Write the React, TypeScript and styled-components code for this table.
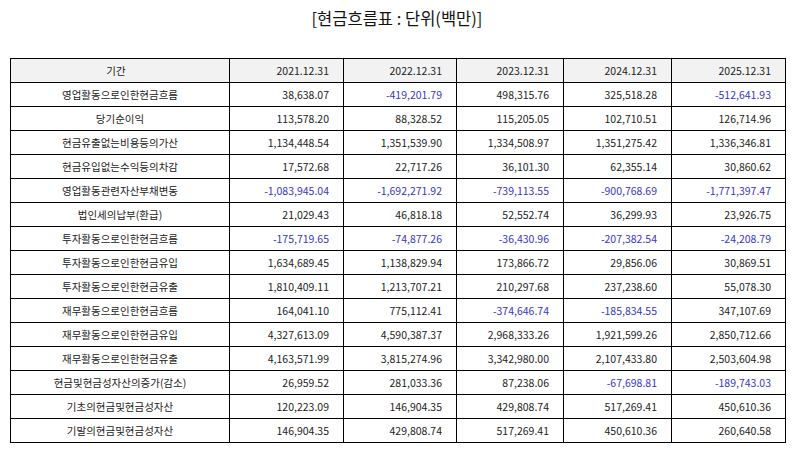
import styled, { createGlobalStyle } from "styled-components";

const GlobalStyle = createGlobalStyle`
  html, body {
    margin: 0;
    padding: 0;
    background: #fff;
  }
  body {
    font-family: "Noto Sans CJK KR", "Noto Sans", sans-serif;
    color: #222;
  }
`;

const Page = styled.div`
  width: 794px;
  height: 452px;
  padding: 5px 10px 0 10px;
  box-sizing: border-box;
`;

const Title = styled.h1`
  margin: 0;
  height: 26px;
  line-height: 26px;
  text-align: center;
  font-size: 16.5px;
  font-weight: 400;
  color: #111;
`;

const Table = styled.table`
  margin-top: 27px;
  width: 775px;
  border-collapse: collapse;
  table-layout: fixed;
  font-size: 10.5px;
`;

const HeadCell = styled.th<{ $align?: string }>`
  height: 23px;
  padding: 0 14px 0 6px;
  border: 1px solid #000;
  background: #f2f2f2;
  font-weight: 400;
  text-align: ${({ $align }) => $align || "right"};
  white-space: nowrap;
`;

const LabelCell = styled.td`
  height: 23px;
  padding: 0 6px;
  border: 1px solid #000;
  text-align: center;
  white-space: nowrap;
`;

const NumCell = styled.td<{ $neg: boolean }>`
  height: 23px;
  padding: 0 14px 0 6px;
  border: 1px solid #000;
  text-align: right;
  white-space: nowrap;
  color: ${({ $neg }) => ($neg ? "#3535cc" : "#222")};
`;

const periods = ["2021.12.31", "2022.12.31", "2023.12.31", "2024.12.31", "2025.12.31"];
const widths = [219, 114, 113, 107, 108, 114];

const rows: [string, string[]][] = [
  ["영업활동으로인한현금흐름", ["38,638.07", "-419,201.79", "498,315.76", "325,518.28", "-512,641.93"]],
  ["당기순이익", ["113,578.20", "88,328.52", "115,205.05", "102,710.51", "126,714.96"]],
  ["현금유출없는비용등의가산", ["1,134,448.54", "1,351,539.90", "1,334,508.97", "1,351,275.42", "1,336,346.81"]],
  ["현금유입없는수익등의차감", ["17,572.68", "22,717.26", "36,101.30", "62,355.14", "30,860.62"]],
  ["영업활동관련자산부채변동", ["-1,083,945.04", "-1,692,271.92", "-739,113.55", "-900,768.69", "-1,771,397.47"]],
  ["법인세의납부(환급)", ["21,029.43", "46,818.18", "52,552.74", "36,299.93", "23,926.75"]],
  ["투자활동으로인한현금흐름", ["-175,719.65", "-74,877.26", "-36,430.96", "-207,382.54", "-24,208.79"]],
  ["투자활동으로인한현금유입", ["1,634,689.45", "1,138,829.94", "173,866.72", "29,856.06", "30,869.51"]],
  ["투자활동으로인한현금유출", ["1,810,409.11", "1,213,707.21", "210,297.68", "237,238.60", "55,078.30"]],
  ["재무활동으로인한현금흐름", ["164,041.10", "775,112.41", "-374,646.74", "-185,834.55", "347,107.69"]],
  ["재무활동으로인한현금유입", ["4,327,613.09", "4,590,387.37", "2,968,333.26", "1,921,599.26", "2,850,712.66"]],
  ["재무활동으로인한현금유출", ["4,163,571.99", "3,815,274.96", "3,342,980.00", "2,107,433.80", "2,503,604.98"]],
  ["현금및현금성자산의증가(감소)", ["26,959.52", "281,033.36", "87,238.06", "-67,698.81", "-189,743.03"]],
  ["기초의현금및현금성자산", ["120,223.09", "146,904.35", "429,808.74", "517,269.41", "450,610.36"]],
  ["기말의현금및현금성자산", ["146,904.35", "429,808.74", "517,269.41", "450,610.36", "260,640.58"]],
];

export default function App() {
  return (
    <>
      <GlobalStyle />
      <Page>
        <Title>[현금흐름표 : 단위(백만)]</Title>
        <Table>
          <colgroup>
            {widths.map((w, i) => (
              <col key={i} style={{ width: w }} />
            ))}
          </colgroup>
          <thead>
            <tr>
              <HeadCell $align="center">기간</HeadCell>
              {periods.map((p) => (
                <HeadCell key={p}>{p}</HeadCell>
              ))}
            </tr>
          </thead>
          <tbody>
            {rows.map(([label, values]) => (
              <tr key={label}>
                <LabelCell>{label}</LabelCell>
                {values.map((v, i) => (
                  <NumCell key={i} $neg={v.startsWith("-")}>
                    {v}
                  </NumCell>
                ))}
              </tr>
            ))}
          </tbody>
        </Table>
      </Page>
    </>
  );
}
